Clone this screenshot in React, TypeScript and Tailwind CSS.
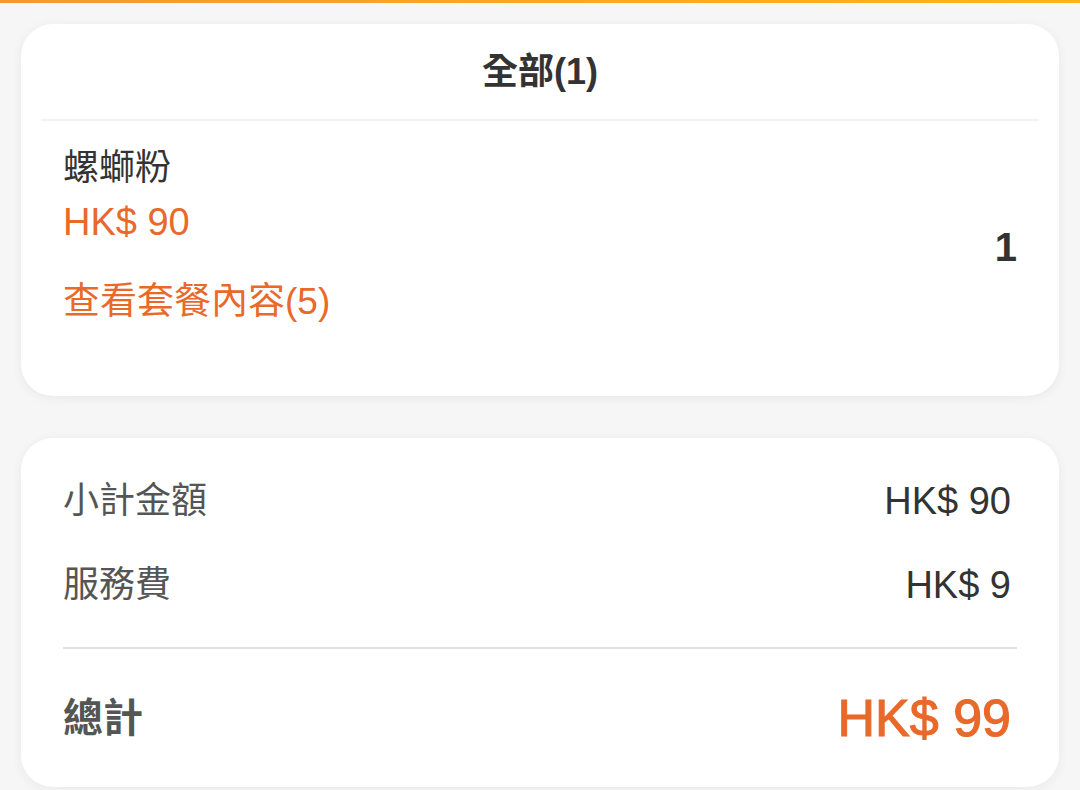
const font = {
  fontFamily: '"Liberation Sans", "Noto Sans CJK TC", sans-serif',
};

const OrderItem = () => (
  <div className="flex items-start justify-between px-[42px] pt-[23px] pb-[70px]">
    <div className="flex flex-col">
      <div className="text-[36px] leading-[48px] text-[#333333]">螺螄粉</div>
      <div className="mt-[6px] text-[38px] leading-[48px] text-[#e8692a]">HK$ 90</div>
      <div className="mt-[32px] text-[37px] leading-[48px] text-[#e8692a]">查看套餐內容(5)</div>
    </div>
    <div className="mt-[79px] text-[40px] font-bold leading-[48px] text-[#333333]">1</div>
  </div>
);

const SummaryRow = ({ label, value }: { label: string; value: string }) => (
  <div className="flex items-center justify-between">
    <span className="text-[36px] leading-[48px] text-[#555555]">{label}</span>
    <span className="pr-[6px] text-[38px] leading-[48px] text-[#333333]">{value}</span>
  </div>
);

export default function App() {
  return (
    <div className="min-h-[790px] bg-[#f6f6f6]" style={font}>
      <div className="h-[3px] bg-linear-to-r from-[#f39a2c] to-[#fbb614]" />

      <div className="mx-[21px] mt-[21px] rounded-[32px] bg-white shadow-[0_2px_12px_rgba(0,0,0,0.06)]">
        <div className="flex h-[95px] items-center justify-center text-[36px] font-bold text-[#333333]">
          全部(1)
        </div>
        <div className="mx-5 h-[2px] bg-[#f2f2f2]" />
        <OrderItem />
      </div>

      <div className="mx-[21px] mt-[42px] rounded-[32px] bg-white px-[42px] pt-[39px] pb-[41px] shadow-[0_2px_12px_rgba(0,0,0,0.06)]">
        <SummaryRow label="小計金額" value="HK$ 90" />
        <div className="mt-[36px]">
          <SummaryRow label="服務費" value="HK$ 9" />
        </div>
        <div className="mt-[38px] h-[2px] bg-[#e2e2e2]" />
        <div className="mt-[41px] flex items-center justify-between">
          <span className="text-[40px] font-bold leading-[56px] text-[#555555]">總計</span>
          <span className="pr-[6px] text-[52px] leading-[56px] text-[#e8692a] [-webkit-text-stroke:1.1px_#e8692a]">
            HK$ 99
          </span>
        </div>
      </div>
    </div>
  );
}
